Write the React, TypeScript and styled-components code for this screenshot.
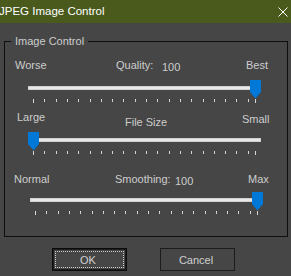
import React from "react";
import styled, { createGlobalStyle, css } from "styled-components";

const GlobalStyle = createGlobalStyle`
  html, body {
    margin: 0;
    padding: 0;
    background: #464646;
  }
  body {
    font-family: "Liberation Sans", Arial, sans-serif;
    font-size: 11px;
    color: #cdcdcd;
  }
`;

const Window = styled.div`
  width: 291px;
  height: 276px;
  background: #464646;
  overflow: hidden;
  display: flex;
  flex-direction: column;
`;

const TitleBar = styled.div`
  flex: none;
  height: 23px;
  background: #4a5a1c;
  display: flex;
  align-items: center;
  justify-content: space-between;
  padding-right: 3px;
`;

const Title = styled.span`
  margin-left: -1px;
  font-size: 11.5px;
  line-height: 23px;
  color: #ffffff;
  white-space: nowrap;
`;

const Group = styled.div`
  position: relative;
  margin: 18px 3px 0 4px;
  height: 196px;
  box-sizing: border-box;
  border: 1px solid #0e0e0e;
  padding-top: 17px;
`;

const Legend = styled.span`
  position: absolute;
  top: -7px;
  left: 6px;
  padding: 0 4px;
  line-height: 13px;
  background: #464646;
  white-space: nowrap;
`;

const Row = styled.div<{ $pad: number; $mt?: number }>`
  display: flex;
  align-items: flex-start;
  height: 18px;
  line-height: 13px;
  padding-left: ${(p) => p.$pad}px;
  margin-top: ${(p) => p.$mt ?? 0}px;
`;

const Label = styled.span<{ $w?: number; $dy?: number }>`
  flex: none;
  width: ${(p) => (p.$w ? `${p.$w}px` : "auto")};
  padding-top: ${(p) => p.$dy ?? 0}px;
  white-space: nowrap;
`;

const TrackSvg = styled.svg<{ $ml: number; $mt: number }>`
  display: block;
  margin-left: ${(p) => p.$ml}px;
  margin-top: ${(p) => p.$mt}px;
`;

const ButtonRow = styled.div`
  display: flex;
  gap: 33px;
  padding-left: 52px;
  margin-top: 11px;
`;

const Button = styled.button<{ $default?: boolean }>`
  width: 75px;
  height: 23px;
  box-sizing: border-box;
  padding: 0 3px 0 0;
  background: #464646;
  color: #d0d0d0;
  font: 11px "Liberation Sans", Arial, sans-serif;
  border: 1px solid #1c1c1c;
  ${(p) =>
    p.$default &&
    css`
      border-color: #0c0c0c;
      box-shadow: inset 0 0 0 1px #1e1e1e;
      outline: 1px dotted #cfcfcf;
      outline-offset: -4px;
    `}
`;

const TICKS = [...Array.from({ length: 20 }, (_, i) => Math.round(5 + i * 11.3)), 227];

type TrackbarProps = { value: number; ml: number; mt: number };

const Trackbar: React.FC<TrackbarProps> = ({ value, ml, mt }) => {
  const cx = 5.5 + value * 222;
  return (
    <TrackSvg width={236} height={26} $ml={ml} $mt={mt}>
      <rect x={0.5} y={7.5} width={232} height={3} fill="#e8e8e8" stroke="#d0d0d0" />
      {TICKS.map((x, i) => (
        <rect
          key={i}
          x={x}
          y={20}
          width={1}
          height={i === 0 || i === TICKS.length - 1 ? 4 : 3}
          fill="#d6d6d6"
        />
      ))}
      <path
        d={`M${cx - 5.5} 1 H${cx + 5.5} V13 L${cx} 19.5 L${cx - 5.5} 13 Z`}
        fill="#0078d7"
      />
    </TrackSvg>
  );
};

const CloseIcon = () => (
  <svg width={10} height={10} viewBox="0 0 10 10">
    <path d="M0.5 0.5 L9.5 9.5 M9.5 0.5 L0.5 9.5" stroke="#ffffff" strokeWidth={1} />
  </svg>
);

const App: React.FC = () => (
  <Window>
    <GlobalStyle />
    <TitleBar>
      <Title>JPEG Image Control</Title>
      <CloseIcon />
    </TitleBar>
    <Group>
      <Legend>Image Control</Legend>
      <Row $pad={10}>
        <Label $w={101}>Worse</Label>
        <Label $w={46}>Quality:</Label>
        <Label $w={84} $dy={2}>100</Label>
        <Label>Best</Label>
      </Row>
      <Trackbar value={1} ml={23} mt={2} />
      <Row $pad={12} $mt={6}>
        <Label $w={108}>Large</Label>
        <Label $w={117} $dy={5}>File Size</Label>
        <Label $dy={2}>Small</Label>
      </Row>
      <Trackbar value={0} ml={23} mt={2} />
      <Row $pad={9} $mt={16}>
        <Label $w={101}>Normal</Label>
        <Label $w={60}>Smoothing:</Label>
        <Label $w={73} $dy={2}>100</Label>
        <Label>Max</Label>
      </Row>
      <Trackbar value={1} ml={25} mt={0} />
    </Group>
    <ButtonRow>
      <Button $default>OK</Button>
      <Button>Cancel</Button>
    </ButtonRow>
  </Window>
);

export default App;
